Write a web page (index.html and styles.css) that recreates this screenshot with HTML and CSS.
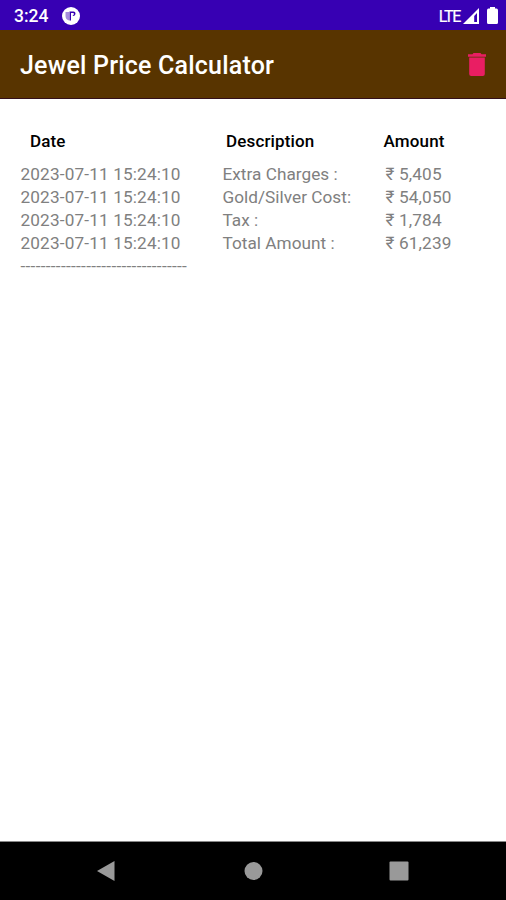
FILE: index.html
```html
<!DOCTYPE html>
<html lang="en">
<head>
<meta charset="utf-8">
<title>Jewel Price Calculator</title>
<link rel="stylesheet" href="styles.css">
</head>
<body>
<div class="screen">
  <div class="status">
    <span class="clock">3:24</span>
    <svg class="notice" viewBox="0 0 18 18"><circle cx="9" cy="9" r="9" fill="#fff"/><path d="M3.500 5h3.500v8.500q-3.500-1-3.500-4.500z" fill="#3700b3" opacity=".45"/><path d="M7.500 4.500h1.500v9h-1.500zM9 4.500h2.500q2 0 2 2t-2 2.500h-1l1.300-1.500q.8-1.500-.8-1.500H9z" fill="#3700b3"/></svg>
    <span class="network">LTE</span>
    <svg class="signal" viewBox="0 0 16 16"><path d="M16 0v16H0z" fill="#fff"/><path d="M14 5v9h-2.800V8z" fill="#3700b3"/></svg>
    <svg class="battery" viewBox="0 0 11 17"><path d="M3 0h5v1.500h1.500Q11 1.500 11 3.500v12q0 1.500-1.500 1.500h-8Q0 17 0 15.500v-12Q0 1.500 1.500 1.500H3z" fill="#fff"/></svg>
  </div>
  <header class="appbar">
    <h1 class="title">Jewel Price Calculator</h1>
    <svg class="trash" viewBox="0 0 18 23"><path d="M0 1.300h4.500L5.500 0h7l1 1.300H18v2.500H0zM1.200 4.600h15.600v16.400q0 2-2 2H3.200q-2 0-2-2z" fill="#e91e63"/></svg>
  </header>
  <main class="history">
    <section class="column date">
      <h2>Date</h2>
      <div>2023-07-11 15:24:10</div>
      <div>2023-07-11 15:24:10</div>
      <div>2023-07-11 15:24:10</div>
      <div>2023-07-11 15:24:10</div>
      <div class="dashes">---------------------------------</div>
    </section>
    <section class="column description">
      <h2>Description</h2>
      <div>Extra Charges :</div>
      <div>Gold/Silver Cost:</div>
      <div>Tax :</div>
      <div>Total Amount :</div>
    </section>
    <section class="column amount">
      <h2>Amount</h2>
      <div>₹ 5,405</div>
      <div>₹ 54,050</div>
      <div>₹ 1,784</div>
      <div>₹ 61,239</div>
    </section>
  </main>
  <nav class="navbar">
    <svg viewBox="0 0 20 22"><path d="M18.500 1v20L1 11z"/></svg>
    <svg viewBox="0 0 20 22"><circle cx="10.500" cy="11" r="9"/></svg>
    <svg viewBox="0 0 20 22"><rect x=".5" y="1.500" width="19" height="19" rx="1"/></svg>
  </nav>
</div>
</body>
</html>
```
FILE: styles.css
```css
* { box-sizing: border-box; }
body { margin: 0; font-family: Roboto, "Noto Sans", sans-serif; background: #fff; }
.screen { height: 900px; display: flex; flex-direction: column; }
.status { height: 30px; background: #3700b3; color: #fff; display: flex; align-items: center; padding: 2px 8px 0 14px; }
.clock { font-size: 17.5px; font-weight: 500; width: 48px; }
.notice { width: 18px; height: 18px; }
.network { margin-left: auto; font-size: 16px; letter-spacing: -1.3px; margin-right: 3px; -webkit-text-stroke: .2px #fff; }
.signal { width: 16px; height: 16px; }
.battery { width: 11px; height: 17px; margin-left: 8px; margin-top: -2px; }
.appbar { height: 69px; background: #583400; border-bottom: 1px solid #33101b; display: flex; align-items: center; justify-content: space-between; padding: 0 20px; }
.title { margin: 3px 0 0; color: #fff; font-size: 25px; font-weight: 500; line-height: 30px; white-space: nowrap; letter-spacing: .2px; }
.trash { width: 18px; height: 23px; }
.history { flex: 1; display: grid; grid-template-columns: 202px 163px 1fr; padding: 31px 0 0 20.5px; }
.column { font-size: 17.2px; line-height: 23.15px; color: #808080; white-space: nowrap; letter-spacing: .15px; }
.column h2 { margin: 0 0 10px; padding-left: 9.5px; font-size: 17px; line-height: 23px; font-weight: 500; color: #000; letter-spacing: .15px; }
.column.description { letter-spacing: .03px; }
.description h2 { padding-left: 3.5px; }
.amount h2 { padding-left: 0; margin-left: -2px; }
.dashes { letter-spacing: .3px; margin-top: -1px; }
.navbar { height: 59px; background: #000; border-top: 1px solid #888; display: flex; align-items: center; justify-content: space-between; padding: 0 97px 0 96px; }
.navbar svg { width: 20px; height: 22px; fill: #999; }
```
